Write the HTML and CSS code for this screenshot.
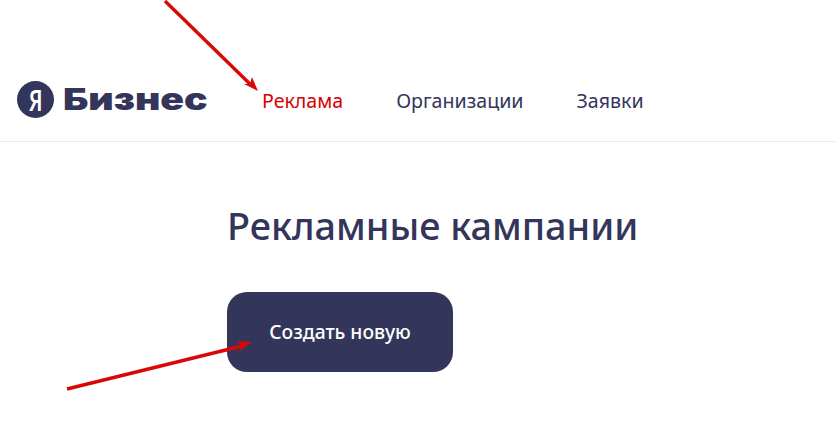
FILE: index.html
```html
<!DOCTYPE html>
<html lang="ru">
<head>
    <meta charset="UTF-8">
    <meta name="viewport" content="width=device-width, initial-scale=1.0">
    <title>Яндекс Бизнес</title>
    <link rel="stylesheet" href="styles.css">
</head>
<body>
    <header class="header">
        <a class="logo" href="#">
            <span class="logo-mark"><span class="logo-letter">Я</span></span>
            <span class="logo-text">Бизнес</span>
        </a>
        <nav class="nav">
            <a class="nav-link active" href="#">Реклама</a>
            <a class="nav-link" href="#">Организации</a>
            <a class="nav-link" href="#">Заявки</a>
        </nav>
    </header>
    <main class="content">
        <h1 class="title">Рекламные кампании</h1>
        <button class="create-button">Создать новую</button>
    </main>

    <svg class="arrows" width="835" height="434" viewBox="0 0 835 434" aria-hidden="true">
        <path class="arrow-line" d="M165 1L250 84"/>
        <path class="arrow-head" d="M258 91L244 84L250 84L252 77Z"/>
        <path class="arrow-line" d="M67 389L242 346"/>
        <path class="arrow-head" d="M252 342L238 352L242 346L237 341Z"/>
    </svg>
</body>
</html>
```

FILE: styles.css
```css
body {
    margin: 0;
    background-color: #fff;
    color: #33355a;
    font-family: 'Noto Sans', sans-serif;
}

.header {
    display: flex;
    align-items: center;
    height: 142px;
    padding: 60px 0 0 17px;
    border-bottom: 1px solid #e8e8e8;
    box-sizing: border-box;
}

.logo {
    display: flex;
    align-items: center;
    gap: 9px;
    width: 245px;
    margin-bottom: 3px;
    color: #33355a;
    text-decoration: none;
}

.logo-mark {
    display: flex;
    justify-content: center;
    align-items: center;
    width: 37px;
    height: 37px;
    border-radius: 50%;
    background-color: #33355a;
    color: #fff;
}

.logo-letter {
    font-size: 29px;
    font-weight: 600;
    line-height: 1;
    transform: scaleX(0.72);
}

.logo-text {
    display: inline-block;
    font-family: 'Inter', sans-serif;
    font-size: 30px;
    font-weight: 900;
    line-height: 1;
    transform: scaleX(1.305);
    transform-origin: left center;
}

.nav {
    display: flex;
    gap: 53px;
}

.nav-link {
    color: #33355a;
    font-size: 19.6px;
    text-decoration: none;
}

.nav-link.active {
    color: #d90000;
}

.content {
    display: flex;
    flex-direction: column;
    align-items: flex-start;
    padding-left: 227px;
}

.title {
    margin: 60px 0 0;
    font-size: 37.8px;
    font-weight: 500;
    line-height: 48px;
}

.create-button {
    width: 226px;
    height: 80px;
    margin-top: 42px;
    padding-bottom: 3px;
    border: none;
    border-radius: 20px;
    background-color: #33355a;
    color: #fff;
    font-family: inherit;
    font-size: 19.3px;
    font-weight: 500;
}

.arrows {
    position: absolute;
    top: 0;
    left: 0;
    pointer-events: none;
}

.arrow-line {
    fill: none;
    stroke: #d90808;
    stroke-width: 3.4;
}

.arrow-head {
    fill: #d90808;
}
```
